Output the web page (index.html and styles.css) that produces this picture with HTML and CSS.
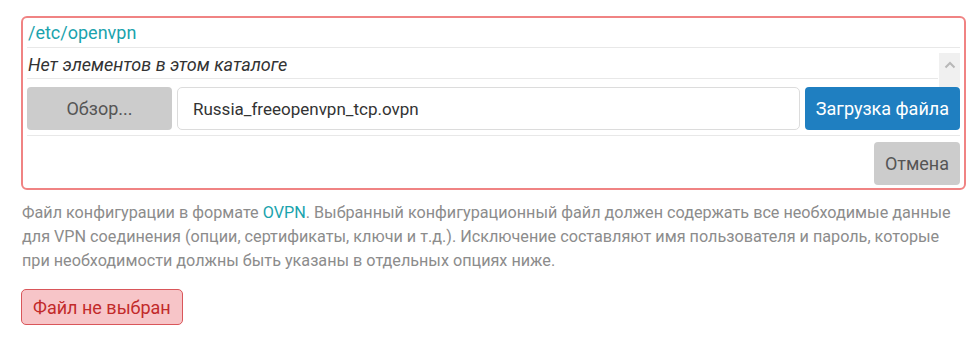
FILE: index.html
```html
<!DOCTYPE html>
<html lang="ru">
<head>
    <meta charset="UTF-8">
    <title>OpenVPN config upload</title>
    <link rel="stylesheet" href="styles.css">
</head>
<body>

    <!-- File browser box -->
    <div class="browser">
        <div class="path">/etc/openvpn</div>

        <div class="listing">
            <div class="listing-items">
                <div class="empty">Нет элементов в этом каталоге</div>
            </div>
            <div class="scrollbar">
                <svg width="12" height="8" viewBox="0 0 12 8"><path d="M1.5 6.5 L6 2 L10.5 6.5" fill="none" stroke="#b8b8b8" stroke-width="2"/></svg>
            </div>
        </div>

        <div class="upload-row">
            <button class="btn btn-gray browse">Обзор...</button>
            <input class="file-name" type="text" value="Russia_freeopenvpn_tcp.ovpn">
            <button class="btn btn-blue">Загрузка файла</button>
        </div>

        <div class="actions">
            <button class="btn btn-gray">Отмена</button>
        </div>
    </div>

    <p class="help">
        Файл конфигурации в формате <span class="accent">OVPN</span>. Выбранный конфигурационный файл должен содержать все необходимые данные<br>
        для VPN соединения (опции, сертификаты, ключи и т.д.). Исключение составляют имя пользователя и пароль, которые<br>
        при необходимости должны быть указаны в отдельных опциях ниже.
    </p>

    <span class="badge">Файл не выбран</span>

</body>
</html>
```

FILE: styles.css
```css
body {
    font-family: Roboto, 'Liberation Sans', sans-serif;
    margin: 0;
    padding: 16px 14px 0 21px;
    background: #fff;
    color: #333;
}

.browser {
    border: 2px solid #f08383;
    border-radius: 6px;
    padding: 0 4px 3px 4px;
}

.path {
    color: #1aa3ad;
    font-size: 18px;
    height: 29px;
    line-height: 30px;
    padding-left: 1px;
    border-bottom: 1px solid #e8e8e8;
}

.listing {
    display: flex;
    margin-top: 5px;
    height: 34px;
}

.listing-items {
    flex: 1;
}

.empty {
    font-style: italic;
    font-size: 18px;
    height: 25px;
    line-height: 24px;
    padding-left: 1px;
    border-bottom: 1px solid #e8e8e8;
}

.scrollbar {
    width: 21px;
    margin-left: 1px;
    background: #f0f0f0;
    display: flex;
    justify-content: center;
    padding-top: 8px;
    box-sizing: border-box;
}

.upload-row {
    display: flex;
    gap: 5px;
    padding-bottom: 5px;
    border-bottom: 1px solid #e8e8e8;
}

.btn {
    font-family: inherit;
    font-size: 18px;
    height: 43px;
    border: none;
    border-radius: 4px;
    padding: 0 11px;
    cursor: pointer;
}

.btn-gray {
    background: #cccccc;
    color: #555;
}

.btn-blue {
    background: #1f7fc1;
    color: #fff;
}

.browse {
    width: 145px;
}

.file-name {
    flex: 1;
    height: 43px;
    box-sizing: border-box;
    border: 1px solid #dcdcdc;
    border-radius: 5px;
    padding: 0 15px;
    font-family: inherit;
    font-size: 17px;
    color: #333;
}

.actions {
    display: flex;
    justify-content: flex-end;
    padding-top: 6px;
}

.help {
    margin: 11px 0 0 1px;
    font-size: 16.2px;
    line-height: 24px;
    color: #8c8c8c;
    white-space: nowrap;
}

.accent {
    color: #1aa3ad;
}

.badge {
    display: inline-block;
    margin-top: 16px;
    height: 36px;
    line-height: 35px;
    box-sizing: border-box;
    padding: 0 11px;
    font-size: 18px;
    color: #c22a2a;
    background: #f7c5c8;
    border: 1px solid #d9565a;
    border-radius: 5px;
}
```
